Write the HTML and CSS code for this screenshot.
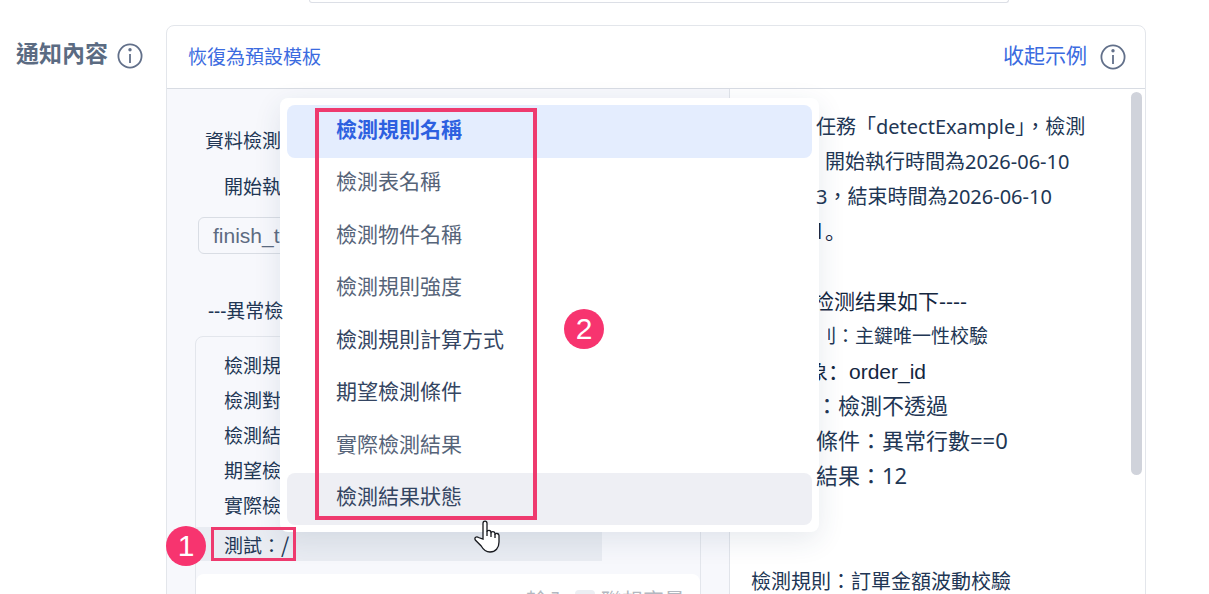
FILE: index.html
```html
<!DOCTYPE html>
<html lang="zh-Hant">
<head>
<meta charset="utf-8">
<title>通知內容</title>
<link rel="stylesheet" href="styles.css">
</head>
<body>
<main class="page">
  <div class="previous-field"></div>
  <section class="field">
    <h2 class="field-label"><span class="raised">通知內容</span>
      <svg class="info" viewBox="0 0 26 26" aria-hidden="true"><circle cx="13" cy="13" r="11.6"/><path d="M13 11v9"/><circle class="dot" cx="13" cy="6.800" r="1.700"/></svg>
    </h2>
    <div class="card">
      <header class="toolbar">
        <a class="reset" href="#">恢復為預設模板</a>
        <div class="example-toggle">
          <a class="raised" href="#">收起示例</a>
          <svg class="info" viewBox="0 0 26 26" aria-hidden="true"><circle cx="13" cy="13" r="11.6"/><path d="M13 11v9"/><circle class="dot" cx="13" cy="6.800" r="1.700"/></svg>
        </div>
      </header>
      <div class="panes">
        <div class="editor">
          <p class="sentence">資料檢測</p>
          <p class="sentence indented">開始執</p>
          <span class="variable">finish_time</span>
          <p class="divider">---異常檢</p>
          <div class="loop">
            <p>檢測規</p>
            <p>檢測對</p>
            <p>檢測結</p>
            <p>期望檢</p>
            <p>實際檢</p>
            <p class="active">測試：<span class="slash">/</span></p>
            <div class="hint">輸入 <kbd>/</kbd> 聯想变量</div>
          </div>
        </div>
        <div class="preview">
          <p class="shown">任務「detectExample」，檢測</p>
          <p class="shown start">開始執行時間為2026-06-10</p>
          <p class="shown">3，結束時間為2026-06-10</p>
          <p class="plain digit" lang="zh-Hans">1。</p>
          <p class="blank"></p>
          <p class="plain tucked" lang="zh-Hans">检测结果如下----</p>
          <p class="shown small"><span class="cut">則</span>：主鍵唯一性校驗</p>
          <p class="plain deep" lang="zh-Hans">象：order_id</p>
          <p class="shown large">：檢測不透過</p>
          <p class="shown large">條件：異常行數==0</p>
          <p class="shown large">結果：12</p>
          <p class="blank"></p>
          <p class="blank"></p>
          <p class="flush">檢測規則：訂單金額波動校驗</p>
          <div class="scrollbar"></div>
        </div>
      </div>
      <div class="menu">
        <button class="selected" type="button">檢測規則名稱</button>
        <button type="button">檢測表名稱</button>
        <button type="button">檢測物件名稱</button>
        <button type="button">檢測規則強度</button>
        <button class="dark" type="button">檢測規則計算方式</button>
        <button class="dark" type="button">期望檢測條件</button>
        <button type="button">實際檢測結果</button>
        <button class="dark hovered" type="button">檢測結果狀態</button>
      </div>
      <div class="frame frame-input"></div>
      <div class="frame frame-menu"></div>
      <span class="badge badge-one">1</span>
      <span class="badge badge-two">2</span>
      <svg class="cursor" viewBox="0 0 26 33" aria-hidden="true"><path d="M9 19V3.2C9 .3 13 .3 13 3.2V12c0-2.300 4-2.300 4 .4v.8c0-2.100 4-2 4 .5v1c0-1.800 4-1.700 4 .8V22c0 6-3.500 10-9 10-4.300 0-6.800-2.500-8.800-6L1.300 20C0 17.700 2.500 16 4.500 17.500z"/><path d="M13 11.500V16M17 12.500V17M21 14V18"/></svg>
    </div>
  </section>
</main>
</body>
</html>
```
FILE: styles.css
```css
* { box-sizing: border-box; }
body {
  margin: 0;
  height: 100vh;
  overflow: hidden;
  background: #fff;
  color: #213654;
  font-family: "Noto Sans", "Noto Sans CJK TC", sans-serif;
}
p, h2 { margin: 0; }
a { color: #3b6be0; text-decoration: none; }
.page { height: 100vh; padding: 0 63px 0 16px; overflow: hidden; }
.previous-field {
  height: 3px;
  margin: 0 137px 22px 293px;
  border: 1px solid #dcdfe6;
  border-top: 0;
  border-radius: 0 0 6px 6px;
}
.field { display: flex; }
.field-label {
  flex: 0 0 150px;
  display: flex;
  gap: 9px;
  height: 62px;
  align-items: center;
  color: #5b6b82;
  font-size: 23px;
  font-weight: 700;
  line-height: 34px;
}
.raised { padding-bottom: 6px; }
.info { width: 26px; height: 26px; fill: none; stroke: #62708a; stroke-width: 1.8; }
.info .dot { fill: #62708a; stroke: none; }
.card {
  position: relative;
  flex: 1;
  min-width: 0;
  border: 1px solid #e3e6eb;
  border-radius: 8px;
}
.toolbar {
  display: flex;
  justify-content: space-between;
  align-items: center;
  height: 63px;
  padding: 0 19px 0 21px;
  border-bottom: 1px solid #d8dce3;
}
.reset { padding-bottom: 2px; font-size: 19px; }
.example-toggle { display: flex; align-items: center; gap: 13px; font-size: 21px; }
.panes { display: flex; height: 640px; }
.editor {
  flex: 0 0 563px;
  padding: 29px 28px 0;
  background: #f7f8fc;
  border-right: 1px solid #e1e4ea;
  font-size: 19px;
}
.sentence { height: 46px; padding-left: 10px; line-height: 46px; }
.indented { padding-left: 29px; }
.variable {
  display: block;
  width: 160px;
  height: 37px;
  margin: 7px 0 39px 3px;
  padding-left: 14px;
  border: 1px solid #d9dde4;
  border-radius: 6px;
  color: #5d6b81;
  font: 21px/35px "Liberation Sans", sans-serif;
}
.divider { position: relative; z-index: 3; padding-left: 13px; line-height: 36px; }
.loop {
  margin-top: 7px;
  padding-top: 12px;
  border: 1px solid #e3e6ec;
  border-radius: 8px;
  line-height: 35px;
}
.loop p { padding-left: 28px; }
.loop .active { width: 406px; height: 34px; margin: 3px 0 13px; background: #e9ecf2; line-height: 38px; }
.slash { font: 21px/20px "Noto Sans CJK TC", sans-serif; }
.hint {
  height: 80px;
  padding: 9px 15px;
  background: #fff;
  border-radius: 8px;
  color: #b3b8c0;
  font-size: 21px;
  text-align: right;
}
kbd {
  display: inline-block;
  width: 20px;
  height: 22px;
  margin: 0 1px;
  border-radius: 4px;
  background: #eceef3;
  font: 16px/22px "Liberation Sans", sans-serif;
  text-align: center;
  vertical-align: 2px;
}
.preview {
  position: relative;
  flex: 1;
  min-width: 0;
  padding: 20px 0 0 86px;
  font-size: 20px;
  line-height: 35px;
  white-space: nowrap;
}
.preview p { height: 35px; }
.preview .shown { position: relative; z-index: 3; }
.preview .start { padding-left: 9px; }
.plain { color: #14263f; font-family: "Liberation Sans", "Noto Sans CJK SC", sans-serif; font-size: 21px; }
.digit { margin-left: -3px; font-family: "Noto Sans", "Noto Sans CJK SC", sans-serif; }
.tucked { margin-left: -3px; }
.deep { margin-left: -9px; }
.preview .small { display: flex; padding-left: 12px; font-size: 19px; }
.cut { display: flex; justify-content: flex-end; width: 8px; overflow: hidden; }
.preview .large { font-size: 22px; line-height: 33px; }
.flush { margin-left: -65px; }
.scrollbar {
  position: absolute;
  top: 3px;
  right: 3px;
  width: 11px;
  height: 383px;
  border-radius: 6px;
  background: #d0d3db;
}
.menu {
  position: absolute;
  z-index: 2;
  top: 72px;
  left: 113px;
  width: 539px;
  padding: 7px;
  border-radius: 8px;
  background: #fff;
  box-shadow: 0 8px 28px rgba(40, 60, 100, .11);
}
.menu button {
  display: block;
  width: 100%;
  height: 52px;
  padding: 0 49px 8px;
  border: 0;
  border-radius: 8px;
  background: transparent;
  color: #566479;
  font: inherit;
  font-size: 21px;
  text-align: left;
}
.menu button:nth-child(odd) { margin-top: 1px; }
.menu .selected:first-child { height: 53px; margin: 0; background: #e4edfe; color: #2d60e0; font-weight: 700; }
.menu .dark { color: #344562; }
.menu .hovered { background: #eeeff4; }
.frame { position: absolute; z-index: 4; border: 4px solid #ee3a6e; }
.frame-input { top: 501px; left: 44px; width: 85px; height: 34px; border-width: 3px; }
.frame-menu { top: 82px; left: 148px; width: 222px; height: 412px; }
.badge {
  position: absolute;
  z-index: 5;
  width: 40px;
  height: 40px;
  border-radius: 50%;
  background: #f7346f;
  color: #fff;
  font: 30px/40px "Liberation Sans", sans-serif;
  text-align: center;
}
.badge-one { top: 500px; left: -1px; }
.badge-two { top: 283px; left: 397px; }
.cursor {
  position: absolute;
  z-index: 6;
  top: 494px;
  left: 307px;
  width: 26px;
  height: 33px;
  fill: #fff;
  stroke: #17191e;
  stroke-width: 1.3;
}
```
